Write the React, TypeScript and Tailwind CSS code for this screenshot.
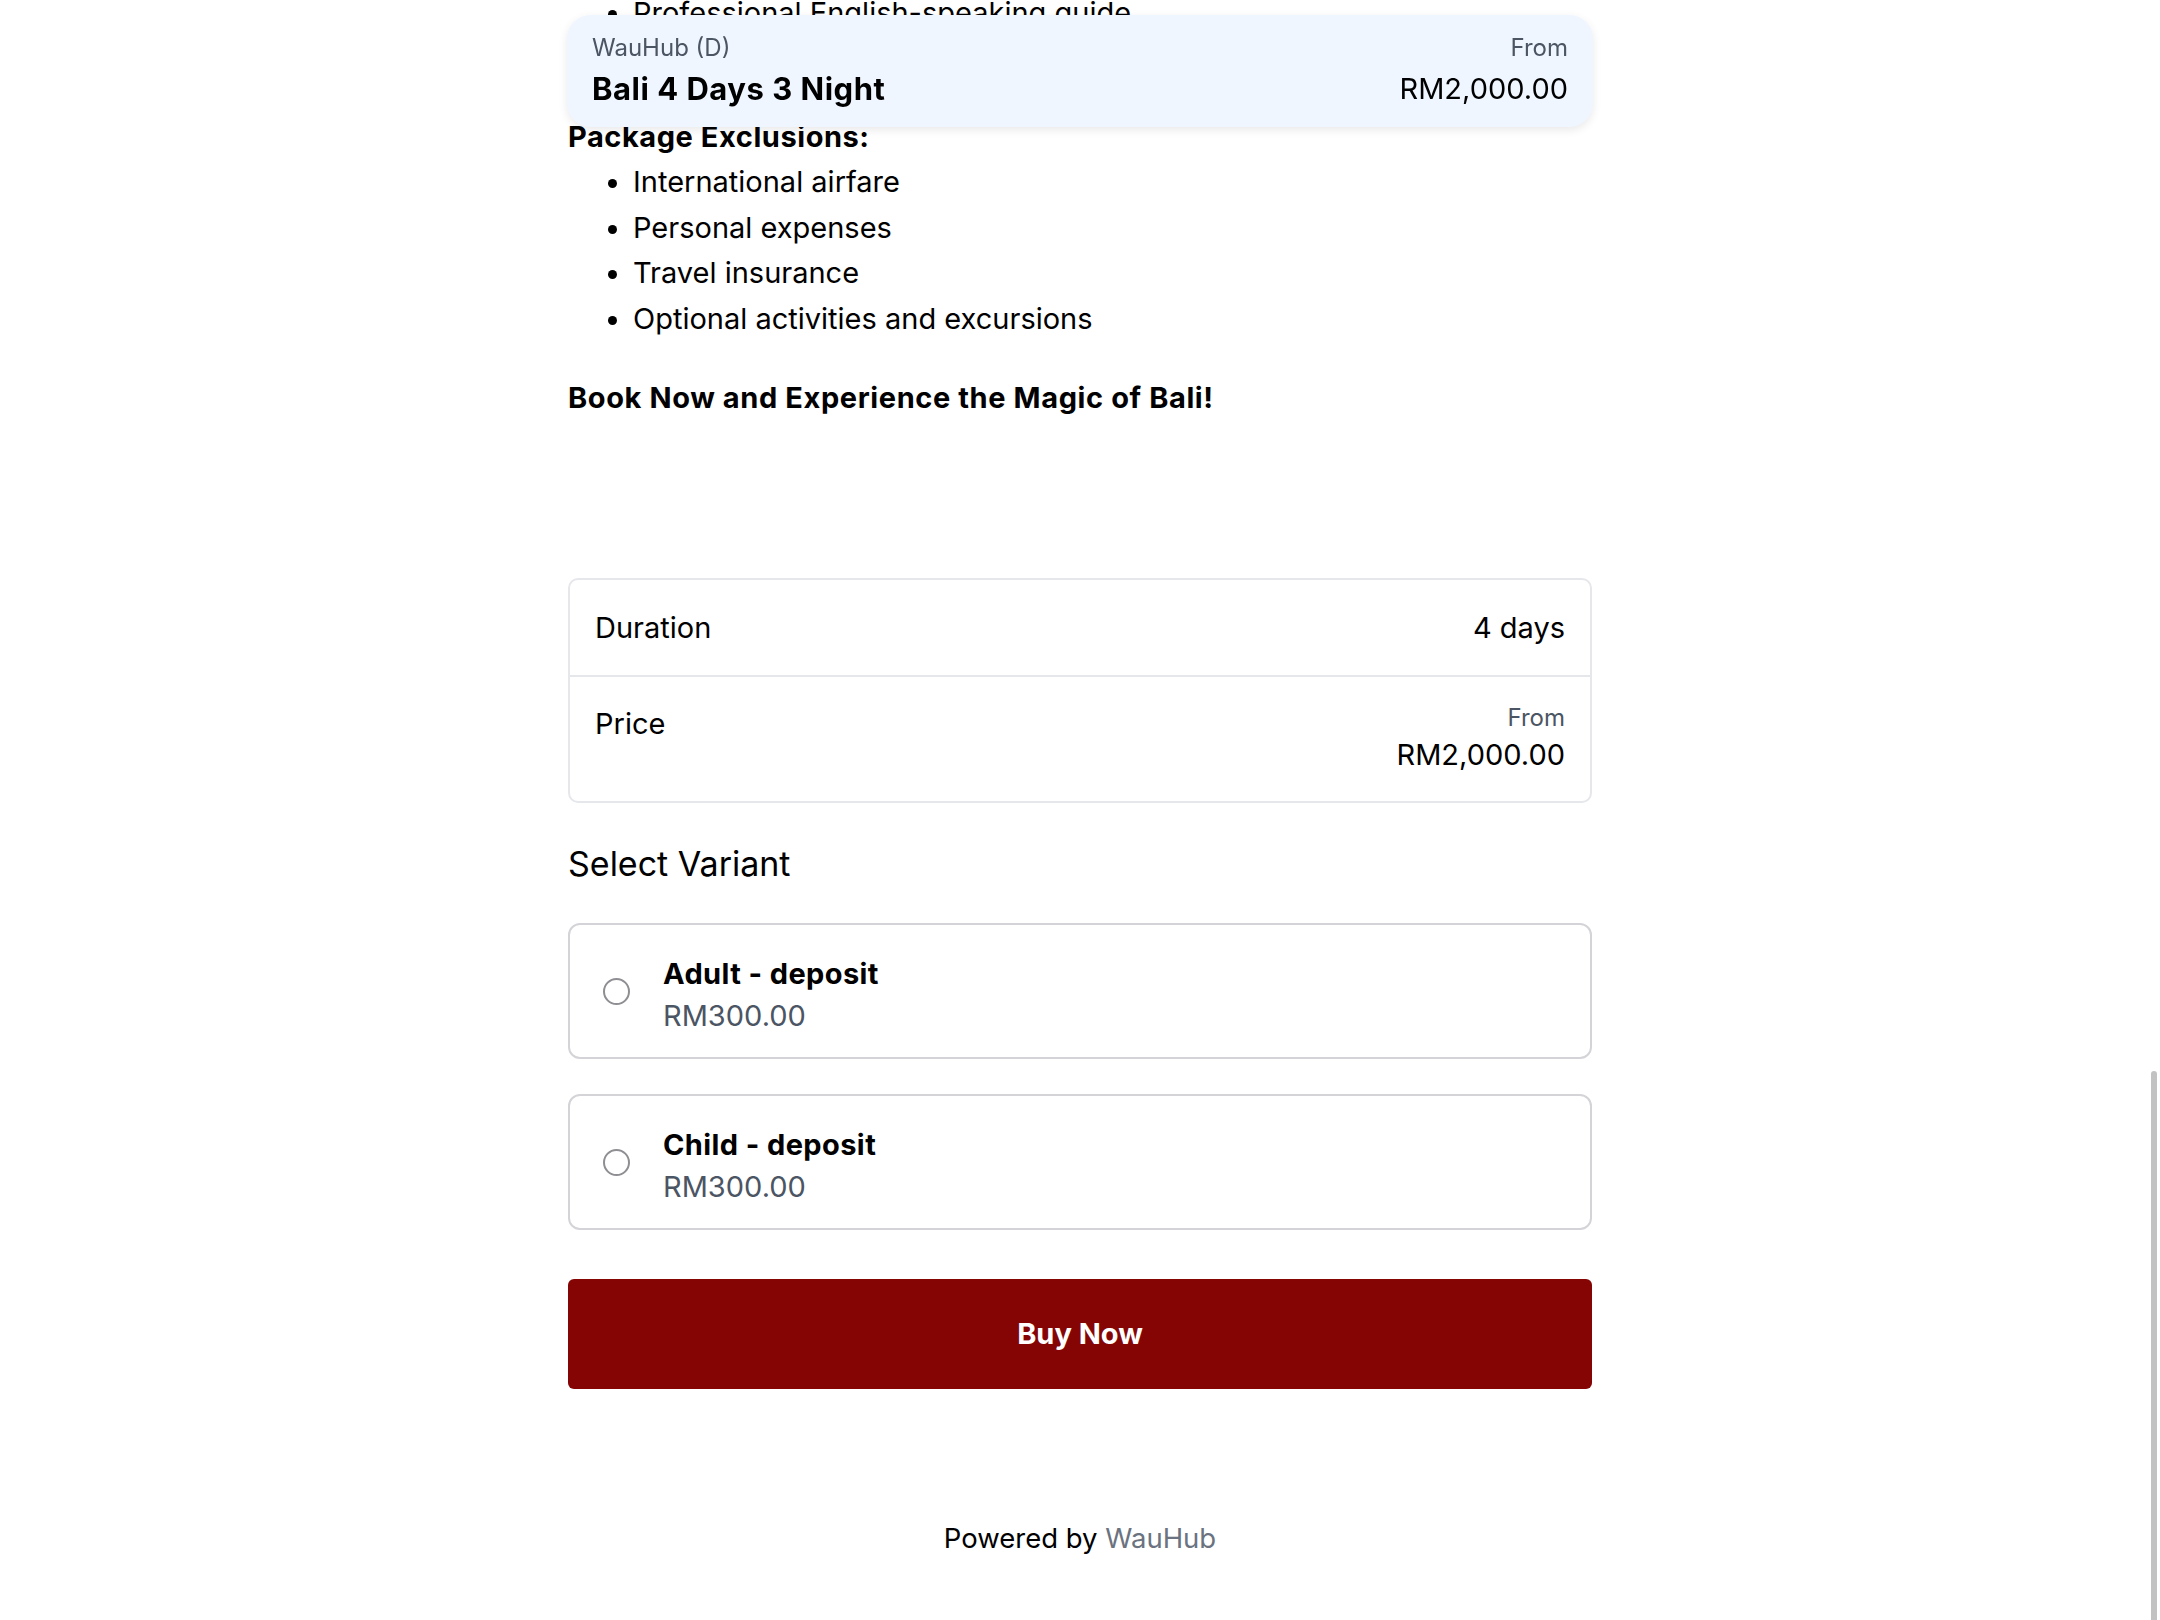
const exclusions = [
  "International airfare",
  "Personal expenses",
  "Travel insurance",
  "Optional activities and excursions",
];

const variants = [
  { name: "Adult - deposit", price: "RM300.00" },
  { name: "Child - deposit", price: "RM300.00" },
];

function StickyHeader() {
  return (
    <header className="fixed inset-x-0 top-[15px] z-10 mx-auto flex w-[1026px] items-start justify-between rounded-[24px] bg-[#eff6ff] px-[25px] pt-[15px] pb-[15px] shadow-[0_3px_10px_rgba(0,0,0,0.09)]">
      <div>
        <div className="text-[24px] leading-[36px] text-[#4b5563]">WauHub (D)</div>
        <div className="text-[31px] leading-[46px] font-bold tracking-[0.5px]">Bali 4 Days 3 Night</div>
      </div>
      <div className="text-right">
        <div className="text-[24px] leading-[36px] text-[#4b5563]">From</div>
        <div className="text-[29px] leading-[46px]">RM2,000.00</div>
      </div>
    </header>
  );
}

function Radio() {
  return <div className="h-[27px] w-[27px] shrink-0 rounded-full border-2 border-[#8e8e93] bg-white" />;
}

export default function App() {
  return (
    <div className="relative h-[1620px] overflow-hidden bg-white font-['Inter',sans-serif] text-black">
      <StickyHeader />

      <main className="mx-auto w-[1024px] text-[29px] leading-[45.5px]">
        <ul className="-mt-[10px] list-disc pl-[65px]">
          <li>Professional English-speaking guide</li>
        </ul>

        <h3 className="mt-[78px] font-bold tracking-[0.55px]">Package Exclusions:</h3>
        <ul className="list-disc pl-[65px]">
          {exclusions.map((item) => (
            <li key={item}>{item}</li>
          ))}
        </ul>

        <p className="mt-[34px] font-bold tracking-[0.6px]">Book Now and Experience the Magic of Bali!</p>

        {/* details table */}
        <div className="mt-[157px] rounded-[10px] border-2 border-[#e5e7eb]">
          <div className="flex justify-between border-b-2 border-[#e5e7eb] px-[25px] py-[25px]">
            <span>Duration</span>
            <span>4 days</span>
          </div>
          <div className="flex items-start justify-between px-[25px] pt-[24px] pb-[26px]">
            <span>Price</span>
            <div className="text-right">
              <div className="text-[24px] leading-[34px] text-[#4b5563]">From</div>
              <div className="leading-[40px]">RM2,000.00</div>
            </div>
          </div>
        </div>

        <h2 className="mt-[39px] text-[34px] leading-[44px]">Select Variant</h2>

        <div className="mt-[37px] flex flex-col gap-[35px]">
          {variants.map((v) => (
            <label
              key={v.name}
              className="flex items-center rounded-[12px] border-2 border-[#d4d4d8] pt-[28px] pb-[20px] pl-[33px]"
            >
              <div className="-mt-[8px]">
                <Radio />
              </div>
              <div className="ml-[33px]">
                <div className="leading-[42px] font-bold tracking-[0.4px]">{v.name}</div>
                <div className="leading-[42px] text-[#4b5563]">{v.price}</div>
              </div>
            </label>
          ))}
        </div>

        <button className="mt-[49px] flex h-[110px] w-full items-center justify-center rounded-[6px] bg-[#850505] font-bold text-white">
          Buy Now
        </button>

        <footer className="mt-[127px] text-center text-[27.5px]">
          Powered by <span className="text-[#6b7280]">WauHub</span>
        </footer>
      </main>

      {/* overlay scrollbar thumb */}
      <div className="absolute top-[1071px] right-[3px] bottom-0 w-[6px] rounded-t-full bg-[#c2c2c2]" />
    </div>
  );
}
